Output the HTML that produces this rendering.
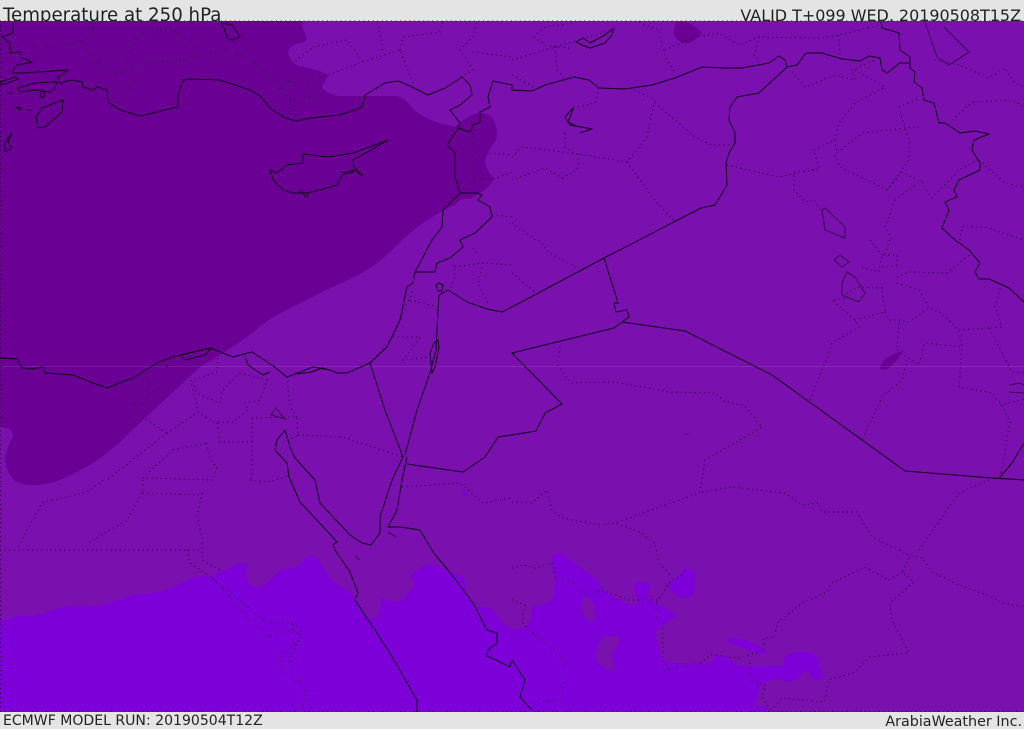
<!DOCTYPE html>
<html><head><meta charset="utf-8"><style>
html,body{margin:0;padding:0;background:#e4e4e4}
svg{display:block}
.c{fill:none;stroke:#12001c;stroke-width:1;stroke-linejoin:round}
.t{fill:none;stroke:#2a0040;stroke-width:.8}
.d{fill:none;stroke:#1c0028;stroke-width:1;stroke-dasharray:1 3.6}
text{font-family:"DejaVu Sans",sans-serif;fill:#222}
</style></head><body>
<svg width="1024" height="729" viewBox="0 0 1024 729" xmlns="http://www.w3.org/2000/svg">
<rect width="1024" height="729" fill="#e4e4e4"/>
<text x="3" y="21" font-size="18.2">Temperature at 250 hPa</text>
<text x="1021" y="21" font-size="15.95" text-anchor="end">VALID T+099 WED, 20190508T15Z</text>
<text x="3" y="725" font-size="14.05">ECMWF MODEL RUN: 20190504T12Z</text>
<text x="1022" y="726" font-size="14.3" text-anchor="end">ArabiaWeather Inc.</text>
<rect y="21" width="1024" height="691" fill="#7a10ae"/>
<!-- dark region -->
<path fill="#6a0094" d="M0 21H302L303 30Q309 38 304 42Q290 44 288 52Q289 60 298 66Q320 70 328 75Q326 82 322 85Q322 92 338 96L395 96Q405 97 412 108Q420 117 442 124L455 127Q465 118 472 115Q485 110 492 118Q499 128 496 140Q487 152 485 160Q486 172 495 179Q487 190 470 199Q462 196 455 205Q430 215 402 240Q380 262 370 268Q350 280 330 288Q300 303 273 317Q255 330 247 337Q225 352 200 367Q175 390 143 420Q125 438 107 453Q85 470 57 481Q30 490 14 480Q5 470 5 457Q8 445 13 437Q15 428 0 427Z"/>
<!-- bright region -->
<path fill="#7e00d8" d="M0 622L17 616Q25 615 33 616L67 606Q85 606 100 606L133 595Q150 593 160 592Q180 585 193 577Q205 576 210 577L240 563L248 564Q245 572 247 580Q249 586 255 587Q262 587 267 583L280 570Q288 568 295 568Q303 560 310 556Q316 556 320 563L330 578Q338 586 347 590Q354 596 357 603L367 618Q375 619 377 617Q381 612 380 608Q381 598 383 598Q390 602 397 602Q406 600 405 595Q412 590 415 583Q411 580 411 575Q420 566 430 564L447 570L463 577Q466 584 465 590Q472 604 477 607Q484 606 490 608Q496 612 500 620Q506 626 512 629L525 628Q532 622 532 608Q540 604 550 603Q555 595 555 577Q552 566 552 558Q555 552 560 553L575 563L597 580Q600 584 602 590Q615 598 629 604Q635 606 639 603Q635 593 634 585Q635 582 637 582L649 583Q651 586 650 590L647 598Q660 605 677 615L655 632Q656 640 662 657Q663 663 672 663L710 663Q714 660 715 655L729 657Q735 664 739 666L782 666Q786 662 784 657Q790 653 799 652Q806 651 812 653Q820 658 820 662Q818 665 819 668Q823 672 822 677Q818 681 815 680Q809 677 810 670Q803 671 799 677Q793 682 789 682L779 679Q765 680 760 687L757 700L752 705L765 707L770 712H0Z"/>
<path fill="#7a10ae" d="M586 597Q591 597 594 607Q596 614 594 620Q590 623 586 619Q581 613 581 606Q582 599 586 597ZM602 637Q610 634 618 637Q620 642 618 646Q612 650 612 656L615 668Q613 672 605 668Q597 665 595 655Q598 646 602 637Z"/>
<path fill="#7e00d8" d="M683 569Q690 568 695 574Q697 578 695 581L694 594Q690 599 682 598Q674 596 668 586Q672 578 681 576ZM728 638Q745 638 755 644Q764 648 767 652Q762 656 753 652Q740 646 730 643Q726 640 728 638ZM462 490L466 491L468 497L464 495Z"/>
<path fill="#6a0094" d="M676 22H686Q697 27 702 33Q697 40 688 43Q678 43 674 35Q674 27 676 22ZM880 368Q882 360 890 356L903 350L897 360Q890 369 884 370Q880 370 880 368ZM685 434L689 433L688 435Z"/>
<!-- faint line -->
<rect y="366" width="1024" height="1" fill="#fff" opacity=".1"/>
<!-- dotted borders -->
<path class="d" d="M0 21H1024M0 711.5H1024M.5 21V712"/>
<path class="d" d="M23 43L50 48L80 42L93 33L92 22M80 42L93 58L113 75L122 72L132 43L143 33L173 30L200 50M122 72L150 62L187 60L223 50L250 58L277 82L280 90L293 77M117 103L137 77M280 88L290 100L287 118M290 100L317 95M307 82L327 75L363 62L347 40L313 47L290 65M363 62L400 50L413 83M400 50L403 37L440 32L443 22M377 22L382 43L383 53M460 50L473 37L477 22M460 50L473 70L460 77M473 52L512 57M512 60L555 47L569 43L612 30M534 37L545 27L572 23M534 37L545 45L569 48M555 47L557 70L564 78M639 23L659 30L665 57L675 73M665 50L692 38L719 33L739 45L759 37L819 38L839 35L879 25M839 35L840 57M759 37L754 55L760 62M792 72L805 87L835 75L855 80L852 70L875 60M855 70L885 87L855 103L839 123L835 140L814 150L819 170L794 172L794 190L805 202L815 200L822 213M835 140L837 153L862 133L905 128L919 127M899 107L920 98M899 107L905 128L910 143L909 160L887 190L840 167L834 152M887 190L902 172L922 182L932 198L959 170L979 160M895 200L922 180M895 200L885 227L892 240M952 120L972 102L1012 100L1024 107M979 160L1005 183L1024 187M935 60L959 65L989 78L1005 68L1015 83L1024 87M960 240L962 227L985 227L1024 240"/>
<path class="d" d="M512 75L535 88M599 88L595 103L575 108M635 90L655 100L652 113L647 137L627 162L579 154L522 147L512 157M655 103L695 137L712 145L732 145M627 162L652 197L675 222M579 154L577 170L562 178L545 168L512 180M565 133L565 147L575 153M727 165L779 177L820 168M512 223L535 240M473 133L473 180L465 193M485 153L512 155M475 180L497 178L512 172M492 215L512 217M539 240L549 253L579 268M512 273L535 292"/>
<path class="d" d="M560 347L557 363L570 383L615 382L669 392L715 393L725 402L744 405L762 427L705 460L702 480L699 493L615 523M702 492L732 487L785 493L802 505L819 503L822 512L857 512L872 537L909 555L922 558L932 572L959 585L992 597L1002 603L1024 607M919 550L945 513L959 493L989 480M909 558L902 572L914 582L890 603L892 620L909 653L870 657L855 672L829 680L824 702L782 698L772 710M902 572L889 580L865 567L832 583L827 592L802 603L777 623L775 637L764 638L764 650L739 658L712 655L700 663L664 670L662 623L655 615L657 600L629 600L602 590L584 595L572 582L555 577L552 563L535 568L524 565L512 568M657 602L669 583L682 575M512 600L525 605L522 622L529 630L552 647L564 662L562 697L532 705M750 663L750 680L765 685L762 697L772 712M512 502L532 503L547 490L552 510L562 518L599 525L615 523L639 532L655 543L659 563L672 577M402 487L460 483L483 503L512 498"/>
<path class="d" d="M0 550L200 550M202 493L197 517L202 537L202 560L220 570M143 480L142 493L200 495M142 493L127 520L88 543M103 480L87 492L42 503L18 547M187 550L190 563L212 578L250 620L267 637L293 630L303 637L280 657L283 673L300 683L312 710M212 578L230 593L267 623L287 622L302 628L298 643L290 657L292 673L307 687L302 710"/>
<path class="d" d="M133 380L135 413L167 433M147 373L153 393L137 407M167 433L198 412L190 377M198 412L213 422L233 422L248 410L245 403L260 400L267 380L240 373L223 390L220 403L197 393L193 380L217 372L218 355M217 423L220 442L252 442M252 418L297 417L298 435L290 440M287 377L290 407L297 417M252 418L252 480M298 435L343 437L403 457M207 443L210 460L217 467L213 480L143 478L173 450L207 443M250 480L270 482L290 475M167 433L107 480"/>
<path class="d" d="M370 363L393 337L413 290M393 337L420 337L403 360L430 357M410 300L437 307M453 260L455 277L450 290M455 267L483 263L512 265M483 263L478 283L488 303M473 248L476 253"/>
<path class="d" d="M810 400L825 363L832 343L859 327L855 320L832 300L852 297M855 320L885 312L882 288L857 287L845 295M885 312L890 320L900 320L909 322L929 308L940 312L959 330L962 347L960 375L959 387L992 393L1002 405L1010 422L1000 477M899 323L897 350L919 365L925 343L962 347M907 360L902 380L882 397L862 440M862 267L879 272L882 255L897 255L897 265L879 268M870 240L882 255M890 240L884 255M897 277L909 272L947 273L969 255M897 283L919 290L929 308M959 330L1002 327L995 307L1000 288M989 328L1012 372L1024 373M1000 405L1024 399"/>
<!-- coasts and borders -->
<path class="c" d="M13 22L13 33L2 37L10 43L10 53L20 52L22 58L32 62L28 63L17 65L13 70L13 73L23 73L68 70L58 78L60 84L63 82L73 80L82 82L83 87L93 90L97 87L107 90L108 102L120 110L130 113L140 116L165 110L178 107L178 95L183 80L190 79L220 80L250 90L260 96L270 108L285 118L297 121L310 118L340 115L355 110L362 107L365 95L385 83L398 81L410 86L428 95L445 88L462 77L470 85L472 95L460 105L450 110L460 123L458 128L470 132L473 125L480 122L480 112L490 107L488 97L493 81L512 85L512 90L532 91L545 85L574 77L589 80L599 88L625 89L652 85L675 78L702 67L725 68L742 68L769 63L779 56L785 60L787 67L797 65L806 53L822 53L842 59L860 61L869 56L880 58L882 70L887 73L900 63L909 63"/>
<path class="c" d="M881 22L882 28L899 33L900 50L910 57L910 68L915 72L914 82L922 88L924 100L934 103L939 123L945 123L960 133L975 131L989 134L974 140L972 150L980 163L980 170L959 180L954 190L957 197L945 202L949 210L942 228L955 240L969 250L980 263L975 272L979 279L989 279L1009 288L1024 302"/>
<path class="c" d="M787 67L759 93L737 97L730 107L729 120L735 133L735 143L729 153L726 163L727 185L715 205L701 208L604 258L512 307L502 312L487 309L467 302L448 290L439 295L437 330L436 350L430 373L417 410L405 455"/>
<path class="c" d="M458 128L447 145L455 153L455 177L460 193L477 193L482 195L478 200L490 207L492 217L475 233L460 240L463 247L450 258L437 263L435 272L415 272M460 193L443 210L442 227L432 240L423 257L415 272L413 283L407 287L400 320L387 347L370 363L347 373L337 373L330 370L313 367L287 377L272 365L252 352L233 357L210 348L173 357L157 363L133 378L107 388L93 383L73 375L45 373L43 367L33 369L22 368L17 359L0 358"/>
<path class="c" d="M370 363L385 410L403 457M407 464L463 472L485 457L498 437L512 435L536 431L545 413L562 404L512 353L614 328L629 317L627 310L616 312L614 303L618 303L604 258M622 322L685 331L772 375L905 471L992 478L1024 480M1000 477L1012 463L1024 443"/>
<path class="c" d="M285 430L277 440L275 450L287 463L289 477L300 502L328 532L337 542L333 545L335 550L350 572L358 593L355 600L388 650L417 700L417 712M285 430L290 447L295 458L315 480L320 503L350 535L362 543L371 545L380 533L380 517L392 480L403 457M407 457L402 480L397 510L388 527L400 527L420 530L433 552L448 570L473 603L487 630L497 633L497 643L488 650L487 656L500 662L510 667L512 660L525 680L520 697L532 710"/>
<!-- Cyprus -->
<path class="c" d="M270 170L273 180L283 190L293 193L307 193L320 190L337 185L342 175L353 170L363 176L354 167L353 160L388 140L353 153L327 157L303 154L303 163L287 165L277 173Z"/>
<path class="c" d="M342 172L352 173L354 169M300 190L306 197L309 193"/>
<!-- Islands -->
<path class="c" d="M63 100L42 108L36 117L38 128L45 127L62 112ZM12 133L5 142L5 152L12 148L8 142ZM0 82L15 77L18 79L5 84L0 84ZM18 88L35 83L57 82L55 88L50 92L35 90L20 92ZM8 93L12 93ZM42 90L45 94L43 98L40 96ZM222 23L232 25L240 37L232 40L228 40ZM16 107L21 108L20 110ZM27 110L31 110"/>
<path class="c" d="M576 42L583 38L590 43L605 35L614 28L612 35L605 43L590 48L582 45Z"/>
<path class="c" d="M574 107L565 117L570 125L592 129L580 133M574 107L568 122L578 127"/>
<path class="c" d="M439 283L436 285L438 291L442 291L443 285ZM438 340L434 343L430 353L432 373L435 367L439 347ZM180 355L211 348L205 355L185 360ZM245 356L248 365L263 375L270 372M297 374L312 372L322 368L330 370M165 365L168 367"/>
<path class="t" d="M847 272L842 283L842 295L859 302L865 293L855 277ZM834 260L840 255L849 262L842 267ZM822 210L825 230L845 238L845 227L825 208ZM925 22L937 57L949 65L969 52L959 42L944 27M1009 385L1020 383L1024 385M1009 392L1024 393M271 415L276 408L285 419ZM355 556L360 560M388 532L396 537"/>
</svg>
</body></html>
